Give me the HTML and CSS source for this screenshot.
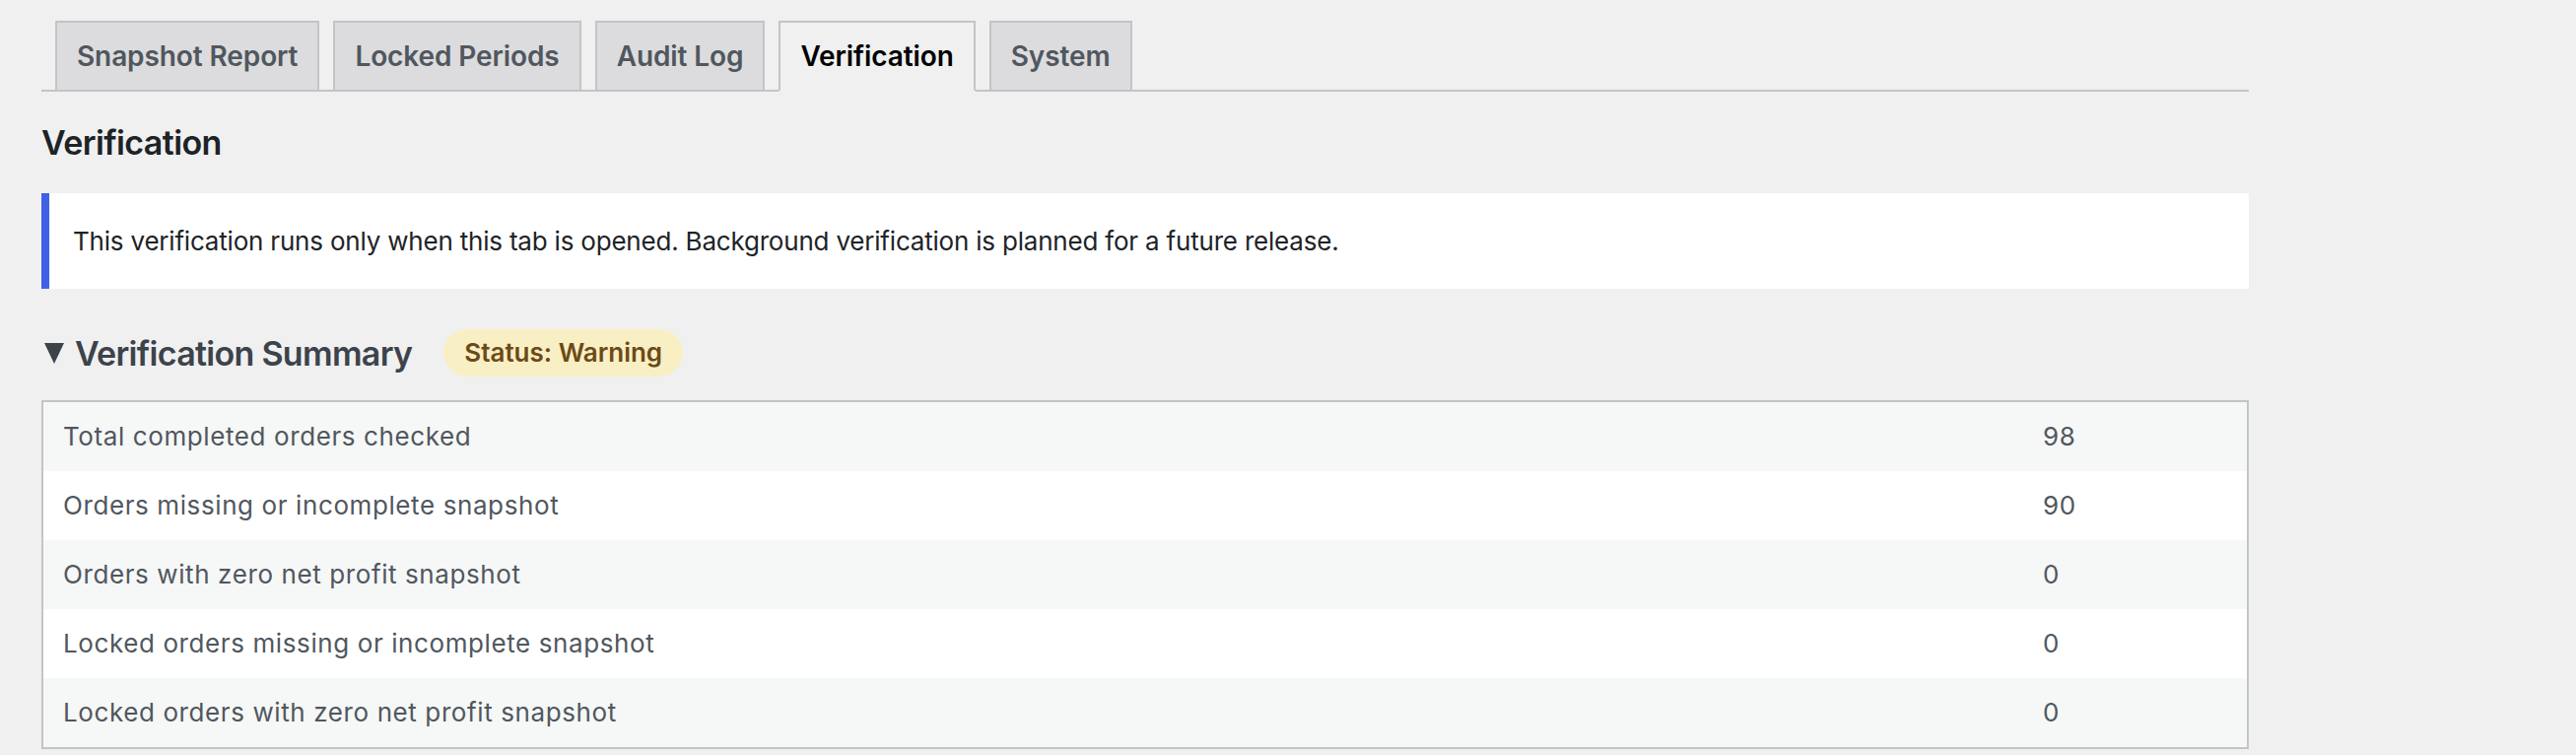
FILE: index.html
```html
<!DOCTYPE html>
<html lang="en">
<head>
  <meta charset="UTF-8">
  <meta name="viewport" content="width=device-width, initial-scale=1.0">
  <title>Verification - Profit Snapshots</title>
  <link rel="stylesheet" href="styles.css">
</head>
<body>
  <div class="wrap">
    <!-- Tab navigation -->
    <nav class="nav-tabs">
      <a class="nav-tab" href="#">Snapshot Report</a>
      <a class="nav-tab" href="#">Locked Periods</a>
      <a class="nav-tab" href="#">Audit Log</a>
      <a class="nav-tab nav-tab-active" href="#">Verification</a>
      <a class="nav-tab" href="#">System</a>
    </nav>

    <h2 class="page-title">Verification</h2>

    <!-- Info notice -->
    <div class="notice">
      <p>This verification runs only when this tab is opened. Background verification is planned for a future release.</p>
    </div>

    <!-- Summary section -->
    <details class="section" open>
      <summary>
        <svg class="marker" width="20" height="21" viewBox="0 0 20 21"><polygon points="0,0 20,0 10,21" /></svg>
        <span class="section-title">Verification Summary</span>
        <span class="badge badge-warning">Status: Warning</span>
      </summary>
      <table class="summary-table">
        <tr>
          <td>Total completed orders checked</td>
          <td class="value">98</td>
        </tr>
        <tr>
          <td>Orders missing or incomplete snapshot</td>
          <td class="value">90</td>
        </tr>
        <tr>
          <td>Orders with zero net profit snapshot</td>
          <td class="value">0</td>
        </tr>
        <tr>
          <td>Locked orders missing or incomplete snapshot</td>
          <td class="value">0</td>
        </tr>
        <tr>
          <td>Locked orders with zero net profit snapshot</td>
          <td class="value">0</td>
        </tr>
      </table>
    </details>

    <details class="section section-next" open>
      <summary>
        <svg class="marker" width="20" height="21" viewBox="0 0 20 21"><polygon points="0,0 20,0 10,21" /></svg>
        <span class="section-title">Problem Orders</span>
      </summary>
    </details>
  </div>
</body>
</html>
```

FILE: styles.css
```css
/* Basic reset */
* {
  box-sizing: border-box;
}

body {
  margin: 0;
  background: #f0f0f1;
  font-family: Inter, "Noto Sans", sans-serif;
  color: #3c434a;
}

/* Main content area */
.wrap {
  max-width: 2240px;
  margin-left: 42px;
  padding-top: 21px;
}

/* Tabs */
.nav-tabs {
  display: flex;
  border-bottom: 2px solid #c3c4c7;
}

.nav-tab {
  margin-left: 14px;
  margin-bottom: -2px;
  padding: 10px 20px;
  font-size: 28px;
  line-height: 48px;
  font-weight: 600;
  letter-spacing: -0.1px;
  color: #50575e;
  text-decoration: none;
  background: #dcdcde;
  border: 2px solid #c3c4c7;
}

.nav-tab-active {
  background: #f0f0f1;
  border-bottom-color: #f0f0f1;
  color: #000;
}

/* Page heading */
.page-title {
  margin: 30px 0 29px;
  font-size: 34px;
  line-height: 44px;
  font-weight: 600;
  letter-spacing: -0.6px;
  color: #1d2327;
}

/* Info notice with blue left border */
.notice {
  background: #fff;
  border-left: 8px solid #4060e6;
  padding: 29px 24px;
}

.notice p {
  margin: 0;
  font-size: 26px;
  line-height: 39px;
  letter-spacing: -0.2px;
  color: #1d2327;
}

/* Collapsible sections */
.section {
  margin-top: 41px;
}

.section summary {
  display: flex;
  align-items: center;
  list-style: none;
  height: 48px;
  margin-bottom: 24px;
  cursor: pointer;
}

.section summary::-webkit-details-marker {
  display: none;
}

.marker {
  fill: #3c434a;
  margin: 0 11px 0 3px;
}

.section-title {
  font-size: 34px;
  font-weight: 600;
  letter-spacing: -0.7px;
  color: #3c434a;
}

.section-next {
  margin-top: 6px;
}

/* Status badge */
.badge {
  margin-left: 32px;
  padding: 0 21px;
  height: 48px;
  line-height: 48px;
  border-radius: 24px;
  font-size: 26px;
  font-weight: 600;
}

.badge-warning {
  background: #f9efc5;
  color: #6b4a17;
}

/* Summary table */
.summary-table {
  width: 100%;
  border: 2px solid #c3c4c7;
  border-spacing: 0;
  background: #fff;
}

.summary-table td {
  padding: 16px 20px;
  font-size: 26px;
  line-height: 38px;
  letter-spacing: 0.6px;
  color: #50575e;
}

.summary-table tr:nth-child(odd) {
  background: #f6f7f7;
}

.summary-table .value {
  width: 227px;
}
```
